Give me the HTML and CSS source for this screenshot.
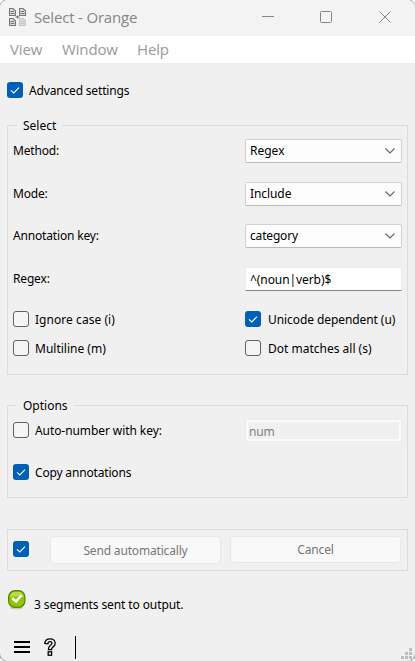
FILE: index.html
```html
<!DOCTYPE html>
<html lang="en">
<head>
<meta charset="utf-8">
<title>Select - Orange</title>
<link rel="stylesheet" href="styles.css">
</head>
<body>
<svg class="defs" width="0" height="0" aria-hidden="true">
  <symbol id="check" viewBox="0 0 16 16"><path d="M4 8.300 6.800 11 12 5.600" fill="none" stroke="#fff" stroke-width="1.100"/></symbol>
  <symbol id="chevron" viewBox="0 0 10 6"><path d="M.5.5 5 5 9.500.5" fill="none" stroke="#666" stroke-width="1.100"/></symbol>
  <symbol id="doc" viewBox="0 0 7 8"><path d="M.5.5h3.500L6.500 3v4.500h-6z" fill="#ddd" stroke="currentColor" stroke-width="1.100"/><path d="M1.500 3.500h3.500M1.500 5.500h4" stroke="currentColor"/></symbol>
</svg>
<div class="window">
  <header class="titlebar">
    <svg class="app-icon" width="18" height="18" viewBox="0 0 18 18">
      <g color="#777"><use href="#doc" x="0" y="0" width="7" height="8"/><use href="#doc" x="10" y="0" width="7" height="8"/><use href="#doc" x="0" y="10" width="7" height="8"/></g>
      <g color="#c4c4c4"><use href="#doc" x="10" y="10" width="7" height="8"/></g>
      <path d="M6.500 9h4M8.500 7.500v3" stroke="#666"/>
    </svg>
    <h1 class="title">Select - Orange</h1>
    <svg class="controls" width="130" height="12" viewBox="0 0 130 12">
      <g fill="none" stroke="#858585"><path d="M0 5.500h12"/><rect x="58.500" y=".5" width="11" height="11" rx="1"/><path d="M117.500.5l11 11M128.500.5l-11 11"/></g>
    </svg>
  </header>
  <nav class="menu"><span class="m-view">View</span><span class="m-window">Window</span><span class="m-help">Help</span></nav>
  <main class="content">
    <label class="option advanced"><span class="box on"><svg width="16" height="16"><use href="#check"/></svg></span><span class="text tight">Advanced settings</span></label>

    <section class="group select">
      <h2 class="legend">Select</h2>
      <div class="row"><span class="tight">Method:</span><div class="combo"><span>Regex</span><svg width="10" height="6"><use href="#chevron"/></svg></div></div>
      <div class="row"><span class="tight">Mode:</span><div class="combo"><span class="slight">Include</span><svg width="10" height="6"><use href="#chevron"/></svg></div></div>
      <div class="row"><span class="tight">Annotation key:</span><div class="combo"><span class="tight">category</span><svg width="10" height="6"><use href="#chevron"/></svg></div></div>
      <div class="row"><span class="tight">Regex:</span><div class="field"><span class="slight">^(noun|verb)$</span></div></div>
      <div class="row flags">
        <label class="option"><span class="box"></span><span class="text wide">Ignore case (i)</span></label>
        <label class="option"><span class="box on"><svg width="16" height="16"><use href="#check"/></svg></span><span class="text inset slight">Unicode dependent (u)</span></label>
      </div>
      <div class="row flags">
        <label class="option"><span class="box"></span><span class="text">Multiline (m)</span></label>
        <label class="option"><span class="box"></span><span class="text inset">Dot matches all (s)</span></label>
      </div>
    </section>

    <section class="group options">
      <h2 class="legend">Options</h2>
      <div class="row"><label class="option"><span class="box"></span><span class="text slight">Auto-number with key:</span></label><div class="field disabled"><span class="tight">num</span></div></div>
      <div class="row"><label class="option"><span class="box on"><svg width="16" height="16"><use href="#check"/></svg></span><span class="text tight">Copy annotations</span></label></div>
    </section>

    <section class="group send">
      <span class="box on"><svg width="16" height="16"><use href="#check"/></svg></span>
      <div class="button auto"><span class="text tight">Send automatically</span></div>
      <div class="button cancel"><span class="tight">Cancel</span></div>
    </section>

    <div class="status">
      <svg width="18" height="20" viewBox="0 0 18 20">
        <ellipse cx="8.500" cy="17.800" rx="6.500" ry="1.700" fill="#c9c9c9"/>
        <rect x=".6" y=".6" width="16.300" height="16.800" rx="6.500" fill="#8fc600" stroke="#4f8500" stroke-width="1.200"/>
        <path d="M2 7.500Q2 2 7 2h4q4.500 0 4.500 5.500Q9 5 2 7.500z" fill="#b5dc48"/>
        <path d="M4.300 8.200 8 11.500 13.200 5.500" fill="none" stroke="#fff" stroke-width="2.600"/>
      </svg>
      <span class="message">3 segments sent to output.</span>
    </div>
  </main>
  <footer class="footer">
    <svg class="burger" width="16" height="12" viewBox="0 0 16 12"><path d="M0 1h16M0 6h16M0 11h16" stroke="#000" stroke-width="2"/></svg>
    <svg class="help" width="12" height="18" viewBox="0 0 12 18"><g fill="#f0f0f0" stroke="#000" stroke-width="1.300"><path d="M.8 5.500C.8 2.300 3 .8 6 .8s5.200 1.600 5.200 4.400c0 2.500-1.500 3.300-2.700 4.200-.8.600-.9 1-.9 2.200H4.400c0-2.300.5-3.200 1.800-4.100C7.400 6.700 8 6.300 8 5.300c0-1-.8-1.600-2-1.600-1.300 0-2 .7-2.100 2.100z"/><rect x="4.200" y="13.800" width="3.400" height="3.400"/></g></svg>
    <i class="divider"></i>
    <svg class="grip" width="11" height="11" viewBox="0 0 11 11"><path d="M8 0h3v3H8zM4 4h3v3H4zM8 4h3v3H8zM0 8h3v3H0zM4 8h3v3H4zM8 8h3v3H8z" fill="#bdbdbd"/></svg>
  </footer>
</div>
</body>
</html>
```
FILE: styles.css
```css
* { box-sizing: border-box; }
body { margin: 0; background: #fff; font: 12px/16px "Noto Sans", "Open Sans", sans-serif; color: #000; }
.defs { position: absolute; }
svg { display: block; flex: none; }
span { white-space: nowrap; }
.window { width: 415px; height: 661px; display: flex; flex-direction: column; overflow: hidden; background: #f0f0f0; border-radius: 8px; box-shadow: 0 0 0 1px #aaa; }
.titlebar { height: 36px; display: flex; background: #f3f3f3; color: #868686; }
.app-icon { margin: 8px 0 0 9px; }
.title { margin: 7px 0 0 7px; width: 227px; font: 400 15px/20px "Open Sans", sans-serif; letter-spacing: -.18px; white-space: nowrap; }
.controls { margin: 11px 0 0 1px; }
.menu { height: 27px; display: flex; padding-left: 10px; background: #fff; color: #999; font: 15px/27px "Open Sans", sans-serif; letter-spacing: -.15px; }
.menu span { flex: none; }
.m-view { width: 52px; }
.m-window { width: 75px; }
.content { height: 564px; padding: 19px 7px 0; display: flex; flex-direction: column; }
.option { display: flex; align-items: center; gap: 6px; height: 16px; }
.text { padding-top: 2px; }
.inset { padding-left: 1px; }
.tight { letter-spacing: -.17px; }
.slight { letter-spacing: -.08px; }
.wide { letter-spacing: .05px; }
.box { flex: none; width: 16px; height: 16px; border: 1px solid #626262; border-radius: 3px; background: #f5f5f5; }
.box.on { border: 0; background: #005fb8; }
.group { width: 401px; border: 1px solid #dcdcdc; }
.select { height: 250px; margin-top: 27px; display: grid; grid-template-rows: 46px 43px 42px 44px 36px 22px; align-content: start; position: relative; }
.select .row:nth-child(2) { padding-top: 4px; }
.legend { position: absolute; top: -8px; left: 9px; margin: 0; padding: 0 6px; background: #f0f0f0; font: inherit; }
.row { display: grid; grid-template-columns: 232px 157px; padding-left: 5px; align-items: center; }
.combo { height: 24px; display: flex; align-items: center; justify-content: space-between; padding: 0 6px 0 4px; border: 1px solid #d2d2d2; border-bottom-color: #b9b9b9; border-radius: 2px; background: #fdfdfd; }
.field { width: 157px; height: 24px; display: flex; align-items: center; padding: 2px 4px 0; border: 1px solid #ececec; border-bottom-color: #868686; background: #fff; }
.options { height: 93px; margin-top: 30px; display: grid; grid-template-rows: 48px 36px; position: relative; align-content: start; }
.options .legend { left: 8px; padding-left: 7px; }
.field.disabled { height: 21px; width: 155px; padding: 3px 0 0 1px; margin-left: 1px; border: 2px solid #fbfbfb; background: #f0f0f0; color: #808080; outline: 1px solid #eaeaea; outline-offset: 0; }
.send { height: 42px; margin-top: 31px; display: flex; padding: 6px 0 0 5px; }
.send .box { margin-top: 5px; }
.button { display: flex; align-items: center; justify-content: center; border: 1px solid #e8e8e8; border-radius: 4px; background: #f9f9f9; color: #777; }
.auto { width: 171px; height: 28px; margin-left: 21px; }
.cancel { width: 171px; height: 27px; margin-left: 9px; }
.status { display: flex; margin: 18px 0 0 1px; }
.status svg { margin-top: 1px; }
.message { margin: 8px 0 0 8px; letter-spacing: -.1px; }
.footer { height: 34px; display: flex; align-items: flex-start; padding-left: 14px; }
.burger { margin-top: 14px; }
.help { margin: 11px 0 0 14px; }
.divider { width: 1px; height: 23px; margin: 9px 0 0 19px; background: #000; }
.grip { margin: 21px 0 0 325px; }
```
